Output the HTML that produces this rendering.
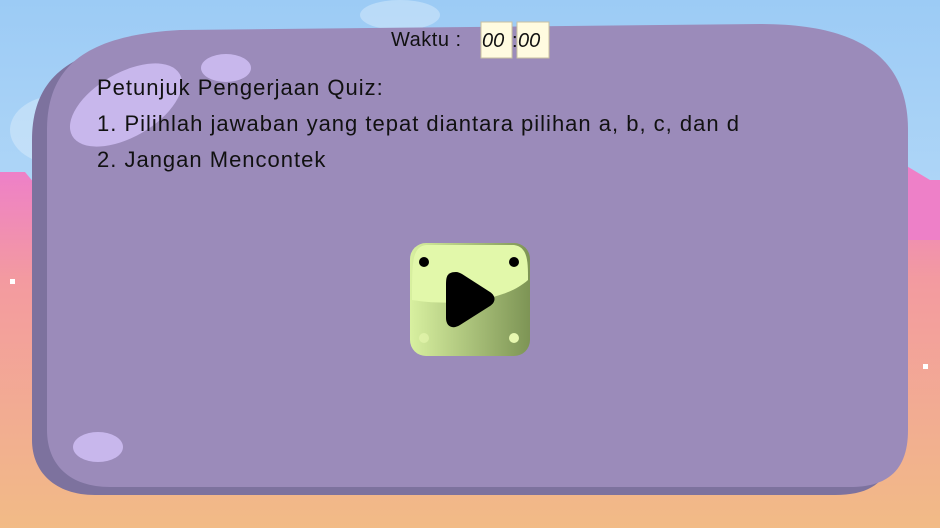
<!DOCTYPE html>
<html><head><meta charset="utf-8"><style>
html,body{margin:0;padding:0}
body{width:940px;height:528px;overflow:hidden;position:relative;font-family:"Liberation Sans",sans-serif}
.t{position:absolute;color:#111;font-size:22px;letter-spacing:1px;white-space:nowrap}
</style></head><body>
<svg width="940" height="528" style="position:absolute;left:0;top:0">
<defs>
<linearGradient id="sky" x1="0" y1="0" x2="0" y2="1"><stop offset="0" stop-color="#9ccbf5"/><stop offset="1" stop-color="#cfe8fb"/></linearGradient>
<linearGradient id="ground" x1="0" y1="0" x2="0" y2="1"><stop offset="0" stop-color="#ee80c8"/><stop offset="0.3" stop-color="#f39aa0"/><stop offset="1" stop-color="#f2bb86"/></linearGradient>
<linearGradient id="btn" x1="0" y1="0" x2="1" y2="0"><stop offset="0" stop-color="#d8f0a0"/><stop offset="1" stop-color="#7d9455"/></linearGradient>
</defs>
<rect width="940" height="528" fill="url(#sky)"/>
<ellipse cx="60" cy="130" rx="50" ry="35" fill="#e6f2fc" opacity="0.4"/>
<ellipse cx="400" cy="15" rx="40" ry="15" fill="#e6f2fc" opacity="0.4"/>
<path d="M0,172 L25,172 L40,190 L940,190 L940,528 L0,528 Z" fill="url(#ground)"/>
<path d="M905,165 L930,180 L940,180 L940,240 L905,240Z" fill="#ee80c8"/>
<rect x="10" y="279" width="5" height="5" fill="#fff"/>
<rect x="923" y="364" width="5" height="5" fill="#fff"/>
<path d="M32,140 C32,70 80,45 170,40 L745,34 C845,34 893,68 893,140 L893,440 C893,478 875,495 835,495 L95,495 C55,495 32,472 32,440 Z" fill="#7d729e"/>
<path d="M47,130 C47,62 92,35 180,30 L760,24 C860,24 908,58 908,130 L908,430 C908,468 890,487 850,487 L110,487 C70,487 47,465 47,430 Z" fill="#9b8bba"/>
<ellipse cx="126" cy="105" rx="62" ry="32" transform="rotate(-30 126 105)" fill="#c8b7ec"/>
<ellipse cx="226" cy="68" rx="25" ry="14" fill="#c8b7ec"/>
<ellipse cx="98" cy="447" rx="25" ry="15" fill="#c8b7ec"/>
<rect x="481" y="22" width="31" height="36" fill="#fffbe0" stroke="#c9c0a0"/>
<rect x="517" y="22" width="32" height="36" fill="#fffbe0" stroke="#c9c0a0"/>
<rect x="410" y="243" width="120" height="113" rx="16" fill="url(#btn)"/>
<path d="M412,300 C412,262 412,247 426,245 L514,245 C528,247 528,262 528,280 C500,305 440,305 412,300 Z" fill="#e2f8aa"/>
<circle cx="424" cy="262" r="5" fill="#000"/>
<circle cx="514" cy="262" r="5" fill="#000"/>
<circle cx="424" cy="338" r="5" fill="#e8f8b0" opacity="0.6"/>
<circle cx="514" cy="338" r="5" fill="#e8f8b0"/>
<path d="M456,272 C446,272 446,278 446,286 L446,318 C446,326 452,330 460,325 L490,306 C496,302 496,296 490,292 L462,274 C460,273 458,272 456,272 Z" fill="#000"/>
</svg>
<div class="t" style="left:391px;top:29px;font-size:20px;letter-spacing:0.5px">Waktu :</div>
<div class="t" style="left:482px;top:30px;font-size:20px;letter-spacing:0;font-style:italic">00</div>
<div class="t" style="left:512px;top:30px;font-size:20px;letter-spacing:0">:</div>
<div class="t" style="left:518px;top:30px;font-size:20px;letter-spacing:0;font-style:italic">00</div>
<div class="t" style="left:97px;top:75px">Petunjuk Pengerjaan Quiz:</div>
<div class="t" style="left:97px;top:111px">1. Pilihlah jawaban yang tepat diantara pilihan a, b, c, dan d</div>
<div class="t" style="left:97px;top:147px">2. Jangan Mencontek</div>
</body></html>
